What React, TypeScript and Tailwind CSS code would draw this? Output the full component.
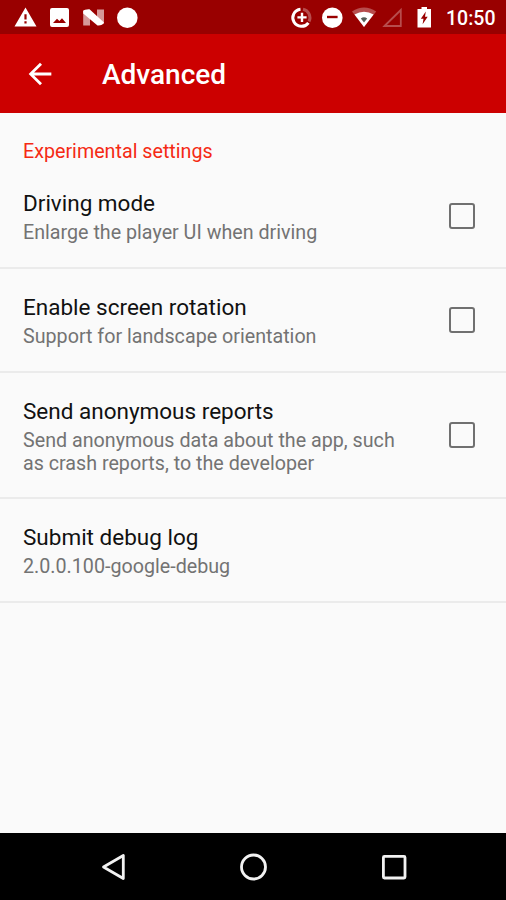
import type { ReactNode } from "react";

type Setting = {
  title: string;
  summary: string;
  checkbox?: boolean;
  rowClass: string;
};

const SETTINGS: Setting[] = [
  {
    title: "Driving mode",
    summary: "Enlarge the player UI when driving",
    checkbox: true,
    rowClass: "h-[104px]",
  },
  {
    title: "Enable screen rotation",
    summary: "Support for landscape orientation",
    checkbox: true,
    rowClass: "h-[104px]",
  },
  {
    title: "Send anonymous reports",
    summary: "Send anonymous data about the app, such as crash reports, to the developer",
    checkbox: true,
    rowClass: "h-[126px]",
  },
  {
    title: "Submit debug log",
    summary: "2.0.0.100-google-debug",
    rowClass: "h-[104px]",
  },
];

function NotificationIcons() {
  return (
    <svg width="140" height="34" viewBox="0 0 140 34" fill="#fff">
      <path
        fillRule="evenodd"
        d="M25.5 7.5 36.5 26.5H14.5ZM24.4 14.2V19.4H26.6V14.2ZM24.4 21.3V23.6H26.6V21.3Z"
      />
      <path
        fillRule="evenodd"
        d="M52 8H67Q69 8 69 10V25Q69 27 67 27H52Q50 27 50 25V10Q50 8 52 8ZM53 23H66L62 18.3 59.4 21 57 18.8Z"
      />
      <path d="M83.2 10.5V25.5H90V17L85.5 10ZM97 9.5V18L101.5 24.5 104 23.5V9.5Z" opacity=".6" />
      <path d="M83.2 11Q84.5 9 89.5 9.2L104 22.5Q102.5 25.8 97.5 25.5L83.2 13.5Z" />
      <circle cx="127.3" cy="17.7" r="10.3" />
    </svg>
  );
}

function SystemIcons() {
  return (
    <svg width="150" height="34" viewBox="286 0 150 34" fill="none">
      <path d="M300.5 9.2A8.6 8.6 0 1 0 308.4 22.8" stroke="#fff" strokeWidth="3" />
      <path d="M303 9.2A8.6 8.6 0 0 1 309 21.5" stroke="#fff" strokeOpacity=".3" strokeWidth="3" />
      <path d="M302 12.8V22M297.4 17.4H306.6" stroke="#fff" strokeWidth="2.4" />
      <circle cx="332.3" cy="17.8" r="10.3" fill="#fff" />
      <path d="M327 17H337.6" stroke="#990000" strokeWidth="2.4" />
      <path d="M352 11.6Q364 3.5 376.2 11.6L364 27Z" fill="#fff" fillOpacity=".3" />
      <path d="M354.5 14.6Q364 8.8 373.6 14.6L364 27Z" fill="#fff" />
      <path d="M360.8 18.4Q364 16.2 367.2 18.4L364 22.6Z" fill="#575e58" />
      <path d="M384.5 26 400.8 10V26Z" stroke="#fff" strokeOpacity=".3" strokeWidth="1.8" />
      <path d="M417.5 9H421.5V7H427V9H431V27.5H417.5Z" fill="#fff" />
      <path d="M425.8 11.5 420.8 18.8H423.5L422.6 24.2 427.7 16.7H425Z" fill="#990000" />
    </svg>
  );
}

function StatusBar() {
  return (
    <div className="flex h-[34px] items-center bg-[#990000] text-white">
      <NotificationIcons />
      <div className="ml-auto flex items-center">
        <SystemIcons />
        <span className="w-[70px] whitespace-nowrap pt-1 pl-[10px] text-[19.5px] leading-[22px] font-medium">
          10:50
        </span>
      </div>
    </div>
  );
}

function AppBar() {
  return (
    <header className="flex h-[78.5px] items-center bg-[#cc0000] pt-[1.5px] pl-[23px] text-white">
      <button type="button" aria-label="Back" className="flex">
        <svg width="34" height="34" viewBox="0 0 24 24" fill="currentColor">
          <path d="M20 11H7.83l5.59-5.59L12 4l-8 8 8 8 1.41-1.41L7.83 13H20v-2z" />
        </svg>
      </button>
      <h1 className="ml-[45px] pt-[2px] text-[28px] leading-8 font-medium">Advanced</h1>
    </header>
  );
}

function SettingRow({ title, summary, checkbox, rowClass }: Setting) {
  return (
    <li className={`flex items-center border-b-2 border-[#ebebeb] pr-[31px] pl-[23px] ${rowClass}`}>
      <div className="w-[390px] pt-[2px]">
        <p className="text-[22.5px] leading-[26px] text-[#111]">{title}</p>
        <p className="mt-[5px] text-[19.7px] leading-[23px] text-[#737373]">{summary}</p>
      </div>
      {checkbox ? (
        <span
          role="checkbox"
          aria-checked="false"
          aria-label={title}
          className="ml-auto size-[26px] rounded-[3px] border-[2.5px] border-[#707070]"
        />
      ) : null}
    </li>
  );
}

function NavButton({ label, children }: { label: string; children: ReactNode }) {
  return (
    <button type="button" aria-label={label} className="flex">
      <svg width="36" height="36" viewBox="0 0 36 36" fill="none" stroke="#f2f2f2" strokeWidth="2.8">
        {children}
      </svg>
    </button>
  );
}

function NavigationBar() {
  return (
    <nav className="flex h-[67px] items-center justify-center gap-[104.5px] bg-black">
      <NavButton label="Back">
        <path d="M28.3 6.5V29.5L8.5 18Z" strokeLinejoin="round" />
      </NavButton>
      <NavButton label="Home">
        <circle cx="18.5" cy="18" r="12" />
      </NavButton>
      <NavButton label="Recent apps">
        <rect x="7.4" y="7.4" width="21.6" height="21.6" rx="1" />
      </NavButton>
    </nav>
  );
}

export default function App() {
  return (
    <div className="flex h-[900px] w-[506px] flex-col overflow-hidden bg-[#fafafa] font-[Roboto,sans-serif]">
      <StatusBar />
      <AppBar />
      <main className="flex-1">
        <h2 className="pt-[27.5px] pl-[23px] text-[19.7px] leading-[23px] text-[#f52a14]">
          Experimental settings
        </h2>
        <ul className="mt-[2px]">
          {SETTINGS.map((setting) => (
            <SettingRow key={setting.title} {...setting} />
          ))}
        </ul>
      </main>
      <NavigationBar />
    </div>
  );
}
